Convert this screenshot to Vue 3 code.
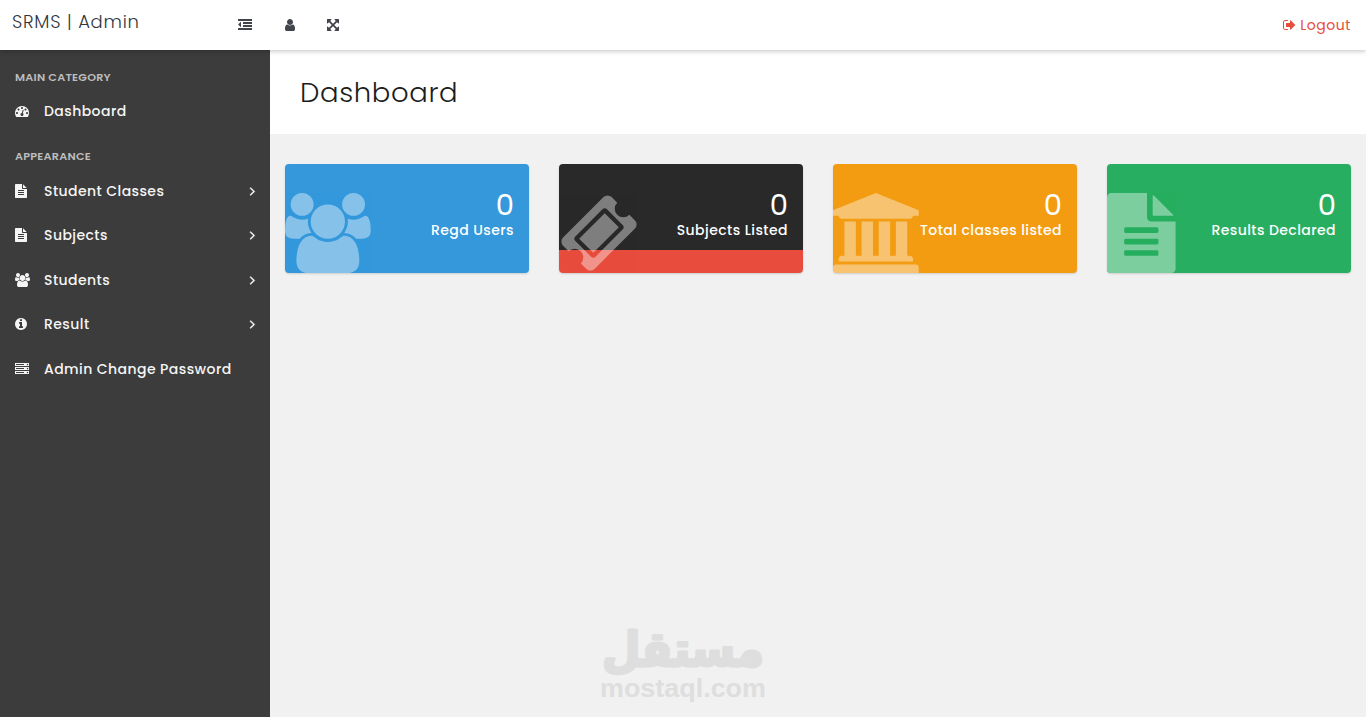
<template>
  <header class="topbar">
    <a class="brand" href="#">SRMS | Admin</a>
    <nav class="tools">
      <svg v-for="name in tools" :key="name" :class="['icon', name]" :viewBox="icons[name].box">
        <path :d="icons[name].d" />
      </svg>
    </nav>
    <a class="logout" href="#">
      <svg class="icon" :viewBox="icons.signOut.box"><path :d="icons.signOut.d" /></svg>
      <span>Logout</span>
    </a>
  </header>

  <div class="layout">
    <aside class="sidebar">
      <template v-for="group in menu" :key="group.title">
        <h6 class="group-title">{{ group.title }}</h6>
        <ul>
          <li v-for="item in group.items" :key="item.text">
            <a href="#" class="menu-item">
              <span class="menu-icon">
                <svg class="icon" :viewBox="icons[item.icon].box"><path :d="icons[item.icon].d" /></svg>
              </span>
              <span class="menu-text">{{ item.text }}</span>
              <svg v-if="item.arrow" class="icon arrow" :viewBox="icons.angle.box">
                <path :d="icons.angle.d" />
              </svg>
            </a>
          </li>
        </ul>
      </template>
    </aside>

    <main class="main">
      <div class="page-title">
        <h2>Dashboard</h2>
      </div>
      <section class="cards">
        <a v-for="card in cards" :key="card.name" href="#" :class="['card', card.color]">
          <svg class="icon card-icon" :viewBox="icons[card.icon].box">
            <path :d="icons[card.icon].d" />
          </svg>
          <span class="number">{{ card.count }}</span>
          <span class="name">{{ card.name }}</span>
        </a>
      </section>
    </main>
  </div>

  <!-- watermark -->
  <svg class="watermark" viewBox="0 0 170 100">
    <text class="wm-ar" x="4" y="55" textLength="162" lengthAdjust="spacingAndGlyphs">مستقل</text>
    <text class="wm-en" x="2" y="86" textLength="166" lengthAdjust="spacingAndGlyphs">mostaql.com</text>
  </svg>
</template>

<script setup>
import { ref } from 'vue'

const tools = ['outdent', 'user', 'expand']

const menu = ref([
  {
    title: 'MAIN CATEGORY',
    items: [{ text: 'Dashboard', icon: 'gauge', arrow: false }],
  },
  {
    title: 'APPEARANCE',
    items: [
      { text: 'Student Classes', icon: 'file', arrow: true },
      { text: 'Subjects', icon: 'file', arrow: true },
      { text: 'Students', icon: 'users', arrow: true },
      { text: 'Result', icon: 'info', arrow: true },
      { text: 'Admin Change Password', icon: 'server', arrow: false },
    ],
  },
])

const cards = ref([
  { name: 'Regd Users', count: 0, color: 'blue', icon: 'users' },
  { name: 'Subjects Listed', count: 0, color: 'dark', icon: 'ticket' },
  { name: 'Total classes listed', count: 0, color: 'orange', icon: 'bank' },
  { name: 'Results Declared', count: 0, color: 'green', icon: 'file' },
])

const icons = {
  outdent: {
    box: '0 0 1792 1792',
    d: 'M384 544v576q0 13-9.5 22.5t-22.5 9.5q-14 0-23-9l-288-288q-9-9-9-23t9-23l288-288q9-9 23-9 13 0 22.5 9.5t9.5 22.5zm1408 768v192q0 13-9.5 22.5t-22.5 9.5h-1728q-13 0-22.5-9.5t-9.5-22.5v-192q0-13 9.5-22.5t22.5-9.5h1728q13 0 22.5 9.5t9.5 22.5zm0-384v192q0 13-9.5 22.5t-22.5 9.5h-1088q-13 0-22.5-9.5t-9.5-22.5v-192q0-13 9.5-22.5t22.5-9.5h1088q13 0 22.5 9.5t9.5 22.5zm0-384v192q0 13-9.5 22.5t-22.5 9.5h-1088q-13 0-22.5-9.5t-9.5-22.5v-192q0-13 9.5-22.5t22.5-9.5h1088q13 0 22.5 9.5t9.5 22.5zm0-384v192q0 13-9.5 22.5t-22.5 9.5h-1728q-13 0-22.5-9.5t-9.5-22.5v-192q0-13 9.5-22.5t22.5-9.5h1728q13 0 22.5 9.5t9.5 22.5z',
  },
  user: {
    box: '256 0 1280 1792',
    d: 'M1536 1399q0 109-62.5 187t-150.5 78h-854q-88 0-150.5-78t-62.5-187q0-85 8.5-160.5t31.5-152 58.5-131 94-89 134.5-34.5q131 128 313 128t313-128q76 0 134.5 34.5t94 89 58.5 131 31.5 152 8.5 160.5zm-256-887q0 159-112.5 271.5t-271.5 112.5-271.5-112.5-112.5-271.5 112.5-271.5 271.5-112.5 271.5 112.5 112.5 271.5z',
  },
  expand: {
    box: '128 0 1536 1792',
    d: 'M1411 541l-355 355 355 355 144-144q29-31 70-14 39 17 39 59v448q0 26-19 45t-45 19h-448q-42 0-59-40-17-39 14-69l144-144-355-355-355 355 144 144q31 30 14 69-17 40-59 40h-448q-26 0-45-19t-19-45v-448q0-42 40-59 39-17 69 14l144 144 355-355-355-355-144 144q-19 19-45 19-12 0-24-5-40-17-40-59v-448q0-26 19-45t45-19h448q42 0 59 40 17 39-14 69l-144 144 355 355 355-355-144-144q-31-30-14-69 17-40 59-40h448q26 0 45 19t19 45v448q0 42-39 59-13 5-25 5-26 0-45-19z',
  },
  signOut: {
    box: '64 0 1664 1792',
    d: 'M704 1440q0 4 1 20t.5 26.5-3 23.5-10 19.5-20.5 6.5h-320q-119 0-203.5-84.5t-84.5-203.5v-704q0-119 84.5-203.5t203.5-84.5h320q13 0 22.5 9.5t9.5 22.5q0 4 1 20t.5 26.5-3 23.5-10 19.5-20.5 6.5h-320q-66 0-113 47t-47 113v704q0 66 47 113t113 47h312l11.5 1 11.5 3 8 5.5 7 9 2 13.5zm928-544q0 26-19 45l-544 544q-19 19-45 19t-45-19-19-45v-288h-448q-26 0-45-19t-19-45v-384q0-26 19-45t45-19h448v-288q0-26 19-45t45-19 45 19l544 544q19 19 19 45z',
  },
  gauge: {
    box: '0 0 1792 1792',
    d: 'M384 1152q0-53-37.5-90.5t-90.5-37.5-90.5 37.5-37.5 90.5 37.5 90.5 90.5 37.5 90.5-37.5 37.5-90.5zm192-448q0-53-37.5-90.5t-90.5-37.5-90.5 37.5-37.5 90.5 37.5 90.5 90.5 37.5 90.5-37.5 37.5-90.5zm428 481l101-382q6-26-7.5-48.5t-38.5-29.5-48 6.5-30 39.5l-101 382q-60 5-107 43.5t-63 98.5q-20 77 20 146t117 89 146-20 89-117q16-60-6-117t-72-91zm660-33q0-53-37.5-90.5t-90.5-37.5-90.5 37.5-37.5 90.5 37.5 90.5 90.5 37.5 90.5-37.5 37.5-90.5zm-640-640q0-53-37.5-90.5t-90.5-37.5-90.5 37.5-37.5 90.5 37.5 90.5 90.5 37.5 90.5-37.5 37.5-90.5zm448 192q0-53-37.5-90.5t-90.5-37.5-90.5 37.5-37.5 90.5 37.5 90.5 90.5 37.5 90.5-37.5 37.5-90.5zm320 448q0 261-141 483-19 29-54 29h-1402q-35 0-54-29-141-221-141-483 0-182 71-348t191-286 286-191 348-71 348 71 286 191 191 286 71 348z',
  },
  file: {
    box: '128 0 1536 1792',
    d: 'M1596 476q14 14 28 36h-472v-472q22 14 36 28zm-476 164h544v1056q0 40-28 68t-68 28h-1344q-40 0-68-28t-28-68v-1600q0-40 28-68t68-28h800v544q0 40 28 68t68 28zm160 736v-64q0-14-9-23t-23-9h-704q-14 0-23 9t-9 23v64q0 14 9 23t23 9h704q14 0 23-9t9-23zm0-256v-64q0-14-9-23t-23-9h-704q-14 0-23 9t-9 23v64q0 14 9 23t23 9h704q14 0 23-9t9-23zm0-256v-64q0-14-9-23t-23-9h-704q-14 0-23 9t-9 23v64q0 14 9 23t23 9h704q14 0 23-9t9-23z',
  },
  users: {
    box: '0 0 1920 1792',
    d: 'M593 896q-162 5-265 128h-134q-82 0-138-40.5t-56-118.5q0-353 124-353 6 0 43.5 21t97.5 42.5 119 21.5q67 0 133-23-5 37-5 66 0 139 81 256zm1071 637q0 120-73 189.5t-194 69.5h-874q-121 0-194-69.5t-73-189.5q0-53 3.5-103.5t14-109 26.5-108.5 43-97.5 62-81 85.5-53.5 111.5-20q10 0 43 21.5t73 48 107 48 135 21.5 135-21.5 107-48 73-48 43-21.5q61 0 111.5 20t85.5 53.5 62 81 43 97.5 26.5 108.5 14 109 3.5 103.5zm-1024-1277q0 106-75 181t-181 75-181-75-75-181 75-181 181-75 181 75 75 181zm704 384q0 159-112.5 271.5t-271.5 112.5-271.5-112.5-112.5-271.5 112.5-271.5 271.5-112.5 271.5 112.5 112.5 271.5zm576 225q0 78-56 118.5t-138 40.5h-134q-103-123-265-128 81-117 81-256 0-29-5-66 66 23 133 23 59 0 119-21.5t97.5-42.5 43.5-21q124 0 124 353zm-128-609q0 106-75 181t-181 75-181-75-75-181 75-181 181-75 181 75 75 181z',
  },
  info: {
    box: '128 0 1536 1792',
    d: 'M1152 1376v-160q0-14-9-23t-23-9h-96v-512q0-14-9-23t-23-9h-320q-14 0-23 9t-9 23v160q0 14 9 23t23 9h96v320h-96q-14 0-23 9t-9 23v160q0 14 9 23t23 9h448q14 0 23-9t9-23zm-128-896v-160q0-14-9-23t-23-9h-192q-14 0-23 9t-9 23v160q0 14 9 23t23 9h192q14 0 23-9t9-23zm640 416q0 209-103 385.5t-279.5 279.5-385.5 103-385.5-103-279.5-279.5-103-385.5 103-385.5 279.5-279.5 385.5-103 385.5 103 279.5 279.5 103 385.5z',
  },
  server: {
    box: '0 0 1792 1792',
    d: 'M128 1408h1024v-128h-1024v128zm0-512h1024v-128h-1024v128zm1568 448q0-40-28-68t-68-28-68 28-28 68 28 68 68 28 68-28 28-68zm-1568-960h1024v-128h-1024v128zm1568 448q0-40-28-68t-68-28-68 28-28 68 28 68 68 28 68-28 28-68zm0-512q0-40-28-68t-68-28-68 28-28 68 28 68 68 28 68-28 28-68zm96 832v384h-1792v-384h1792zm0-512v384h-1792v-384h1792zm0-512v384h-1792v-384h1792z',
  },
  ticket: {
    box: '0 0 1792 1792',
    d: 'M1024 452l316 316-572 572-316-316zm-211 979l618-618q19-19 19-45t-19-45l-362-362q-18-18-45-18t-45 18l-618 618q-19 19-19 45t19 45l362 362q18 18 45 18t45-18zm889-637l-907 908q-37 37-90.5 37t-90.5-37l-126-125q56-56 56-136t-56-136-136-56-136 56l-125-126q-37-37-37-90.5t37-90.5l907-906q37-37 90.5-37t90.5 37l125 125q-56 56-56 136t56 136 136 56 136-56l126 125q37 37 37 90.5t-37 90.5z',
  },
  bank: {
    box: '0 0 1920 1792',
    d: 'M960 0l960 384v128h-128q0 26-20.5 45t-48.5 19h-1526q-28 0-48.5-19t-20.5-45h-128v-128zm-704 640h256v768h128v-768h256v768h128v-768h256v768h128v-768h256v768h59q28 0 48.5 19t20.5 45v64h-1664v-64q0-26 20.5-45t48.5-19h59v-768zm1595 960q28 0 48.5 19t20.5 45v128h-1920v-128q0-26 20.5-45t48.5-19h1782z',
  },
  angle: {
    box: '576 0 640 1792',
    d: 'M1171 960q0 13-10 23l-466 466q-10 10-23 10t-23-10l-50-50q-10-10-10-23t10-23l393-393-393-393q-10-10-10-23t10-23l50-50q10-10 23-10t23 10l466 466q10 10 10 23z',
  },
}
</script>

<style>
body {
  background-color: #f1f1f1;
}
#app {
  font-family: Poppins, Inter, 'Open Sans', sans-serif;
}
</style>

<style scoped>
a {
  text-decoration: none;
}
ul {
  list-style: none;
  margin: 0;
  padding: 0;
}
.icon {
  display: block;
  height: 14px;
  fill: currentColor;
  overflow: visible;
}

/* top bar */
.topbar {
  position: relative;
  z-index: 2;
  display: flex;
  align-items: center;
  box-sizing: border-box;
  height: 50px;
  padding: 0 15px 0 12px;
  background-color: #fff;
  box-shadow: 0 1px 5px rgba(0, 0, 0, 0.25);
}
.brand {
  width: 225.5px;
  padding-bottom: 7px;
  font-size: 18px;
  font-weight: 300;
  letter-spacing: 0.75px;
  color: #33363d;
  white-space: nowrap;
}
.tools {
  display: flex;
  color: #41444b;
}
.tools .user {
  margin-left: 33.5px;
}
.tools .expand {
  margin-left: 31.5px;
}
.logout {
  display: flex;
  align-items: center;
  gap: 4px;
  margin-left: auto;
  font-size: 14px;
  letter-spacing: 0.55px;
  color: #e74c3c;
}

/* sidebar */
.layout {
  display: flex;
  height: 667px;
}
.sidebar {
  box-sizing: border-box;
  width: 270px;
  padding-top: 17px;
  background-color: #3c3c3c;
}
.group-title {
  height: 20px;
  margin: 0;
  padding-left: 15px;
  font-size: 11.2px;
  font-weight: 600;
  line-height: 20px;
  letter-spacing: 0.25px;
  color: #bdbdbd;
}
ul + .group-title {
  margin-top: 12px;
}
.group-title + ul {
  padding-top: 2.7px;
}
.menu-item {
  display: flex;
  align-items: center;
  height: 44.5px;
  padding: 0 15px;
  color: #f5f5f5;
}
.menu-icon {
  width: 29px;
}
.menu-icon .icon {
  margin-bottom: 1px;
}
.menu-text {
  font-size: 14px;
  font-weight: 500;
  letter-spacing: 0.43px;
  white-space: nowrap;
}
.arrow {
  margin-left: auto;
  margin-bottom: 1px;
  stroke: currentColor;
  stroke-width: 70;
}

/* content */
.main {
  flex: 1;
}
.page-title {
  display: flex;
  align-items: center;
  box-sizing: border-box;
  height: 84px;
  padding: 2px 0 0 30px;
  background-color: #fff;
}
.page-title h2 {
  margin: 0;
  font-size: 27.5px;
  font-weight: 300;
  letter-spacing: 0.6px;
  color: #1c1c1c;
}
.cards {
  display: grid;
  grid-template-columns: repeat(4, 1fr);
  gap: 30px;
  padding: 30px 15px;
}
.card {
  position: relative;
  display: flex;
  flex-direction: column;
  align-items: flex-end;
  box-sizing: border-box;
  height: 109px;
  padding: 26px 15px 0 0;
  border-radius: 4px;
  overflow: hidden;
  color: #fff;
  box-shadow: 0 1px 2px rgba(0, 0, 0, 0.15);
}
.card-icon {
  position: absolute; /* sits behind the number and the label */
  left: 0;
  bottom: 0;
  height: 80px;
  opacity: 0.4;
}
.number {
  position: relative;
  font-size: 29px;
  font-weight: 400;
  line-height: 30px;
}
.name {
  position: relative;
  font-size: 14px;
  font-weight: 500;
  line-height: 20px;
  letter-spacing: 0.43px;
  white-space: nowrap;
}
.blue {
  background-color: #3498db;
}
.dark {
  background: linear-gradient(#292929 86px, #e74c3c 86px);
}
.orange {
  background-color: #f39c12;
}
.green {
  background-color: #27ae60;
}

.watermark {
  position: absolute;
  left: 598px;
  top: 611px;
  width: 170px;
  height: 100px;
  fill: #dedede;
  overflow: visible;
}
.wm-ar {
  font-family: 'DejaVu Sans', sans-serif;
  font-size: 48px;
  font-weight: 700;
  stroke: #dedede;
  stroke-width: 3;
  stroke-linejoin: round;
}
.wm-en {
  font-family: 'Liberation Sans', Arial, sans-serif;
  font-size: 26px;
  font-weight: 700;
}
</style>
